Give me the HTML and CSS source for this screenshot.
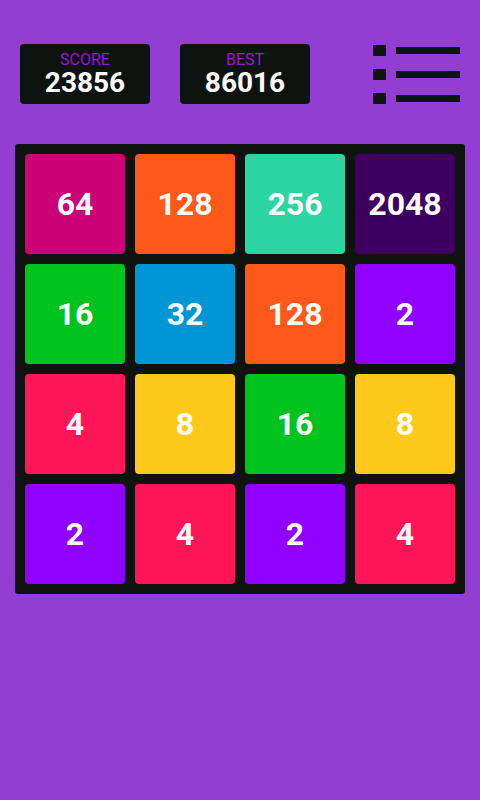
FILE: index.html
```html
<!DOCTYPE html>
<html>
<head>
<meta charset="utf-8">
<link rel="stylesheet" href="styles.css">
</head>
<body>
<div class="header">
  <div class="scorebox score">
    <div class="label">SCORE</div>
    <div class="value">23856</div>
  </div>
  <div class="scorebox best">
    <div class="label">BEST</div>
    <div class="value">86016</div>
  </div>
  <div class="menu">
    <div class="row"><span class="sq"></span><span class="ln"></span></div>
    <div class="row"><span class="sq"></span><span class="ln"></span></div>
    <div class="row"><span class="sq"></span><span class="ln"></span></div>
  </div>
</div>
<div class="board">
  <div class="tile t64">64</div>
  <div class="tile t128">128</div>
  <div class="tile t256">256</div>
  <div class="tile t2048">2048</div>
  <div class="tile t16">16</div>
  <div class="tile t32">32</div>
  <div class="tile t128">128</div>
  <div class="tile t2">2</div>
  <div class="tile t4">4</div>
  <div class="tile t8">8</div>
  <div class="tile t16">16</div>
  <div class="tile t8">8</div>
  <div class="tile t2">2</div>
  <div class="tile t4">4</div>
  <div class="tile t2">2</div>
  <div class="tile t4">4</div>
</div>
</body>
</html>
```
FILE: styles.css
```css
html, body {
  margin: 0;
  padding: 0;
  background: #933ed2;
  font-family: Roboto, "Liberation Sans", sans-serif;
  width: 480px;
  height: 800px;
  overflow: hidden;
}
.header {
  display: flex;
  align-items: flex-start;
  padding-top: 44px;
  height: 60px;
}
.scorebox {
  width: 130px;
  height: 60px;
  box-sizing: border-box;
  background: #0f1310;
  border-radius: 4px;
  text-align: center;
  padding-top: 7px;
}
.score { margin-left: 20px; }
.best { margin-left: 30px; }
.label {
  font-size: 16px;
  line-height: 17px;
  color: #9a14db;
}
.value {
  font-size: 28px;
  line-height: 30px;
  font-weight: bold;
  color: #ffffff;
}
.menu {
  margin-left: auto;
  margin-right: 20px;
  margin-top: 1px;
  display: flex;
  flex-direction: column;
  gap: 13px;
}
.row {
  display: flex;
  align-items: center;
  gap: 10px;
  height: 11px;
}
.sq {
  width: 13px;
  height: 11px;
  background: #0f1310;
}
.ln {
  width: 64px;
  height: 7px;
  background: #0f1310;
}
.board {
  margin: 40px 0 0 15px;
  width: 450px;
  height: 450px;
  box-sizing: border-box;
  padding: 10px;
  background: #0f1310;
  border-radius: 3px;
  display: grid;
  grid-template-columns: repeat(4, 100px);
  grid-template-rows: repeat(4, 100px);
  gap: 10px;
}
.tile {
  border-radius: 4px;
  display: flex;
  align-items: center;
  justify-content: center;
  color: #ffffff;
  font-weight: bold;
  font-size: 32px;
}
.t2 { background: #9000ff; }
.t4 { background: #ff1659; }
.t8 { background: #ffc91b; }
.t16 { background: #00c41d; }
.t32 { background: #0096d5; }
.t64 { background: #cc0077; }
.t128 { background: #ff581b; }
.t256 { background: #2bd5a2; }
.t2048 { background: #3d0060; }
```
